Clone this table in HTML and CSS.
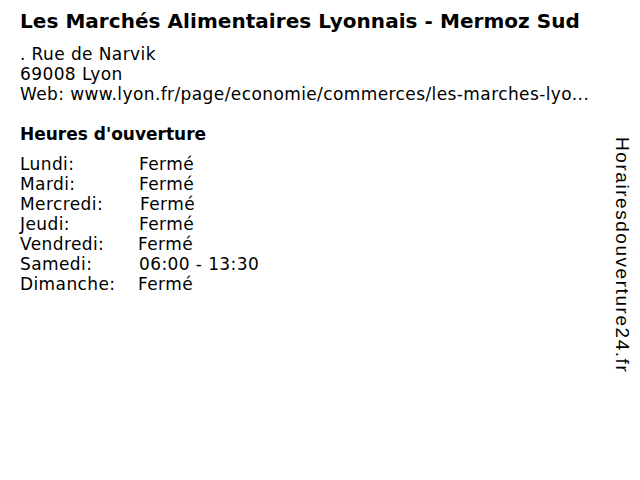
FILE: index.html
```html
<!DOCTYPE html>
<html lang="fr">
<head>
<meta charset="utf-8">
<link rel="stylesheet" href="styles.css">
</head>
<body>
<div class="page">
  <main class="main">
    <h1 class="title">Les Marchés Alimentaires Lyonnais - Mermoz Sud</h1>
    <div class="address">
      <div>. Rue de Narvik</div>
      <div>69008 Lyon</div>
      <div>Web: www.lyon.fr/page/economie/commerces/les-marches-lyo...</div>
    </div>
    <h2 class="hours-title">Heures d'ouverture</h2>
    <div class="hours">
      <span class="day">Lundi:</span><span class="time">Fermé</span>
      <span class="day">Mardi:</span><span class="time">Fermé</span>
      <span class="day">Mercredi:</span><span class="time shift-r">Fermé</span>
      <span class="day">Jeudi:</span><span class="time">Fermé</span>
      <span class="day">Vendredi:</span><span class="time shift-l">Fermé</span>
      <span class="day">Samedi:</span><span class="time">06:00 - 13:30</span>
      <span class="day">Dimanche:</span><span class="time shift-l">Fermé</span>
    </div>
  </main>
  <aside class="side">Horairesdouverture24.fr</aside>
</div>
</body>
</html>
```

FILE: styles.css
```css
html, body {
  margin: 0;
  padding: 0;
  background: #fff;
}
body {
  width: 640px;
  height: 480px;
  overflow: hidden;
  color: #000;
  font-family: "DejaVu Sans", Verdana, sans-serif;
}
.page {
  display: flex;
  height: 480px;
}
.main {
  flex: 1;
  padding: 9px 0 0 20px;
}
.title {
  margin: 0;
  font-size: 20px;
  letter-spacing: 0.05px;
  line-height: 24px;
  font-weight: bold;
}
.address {
  margin-top: 11px;
  font-size: 17px;
  letter-spacing: 0.4px;
  line-height: 20px;
}
.hours-title {
  margin: 20px 0 0;
  font-size: 17px;
  line-height: 20px;
  font-weight: bold;
}
.hours {
  margin-top: 10px;
  display: grid;
  grid-template-columns: 119px auto;
  font-size: 17px;
  letter-spacing: 0.4px;
  line-height: 20px;
}
.shift-r { margin-left: 1px; }
.shift-l { margin-left: -1px; }
.side {
  width: 40px;
  padding: 137px 0 0 4px;
  writing-mode: vertical-rl;
  font-family: "Liberation Sans", Arial, sans-serif;
  font-size: 19px;
  letter-spacing: 1.55px;
  line-height: 36px;
  color: #000;
  box-sizing: border-box;
}
```
